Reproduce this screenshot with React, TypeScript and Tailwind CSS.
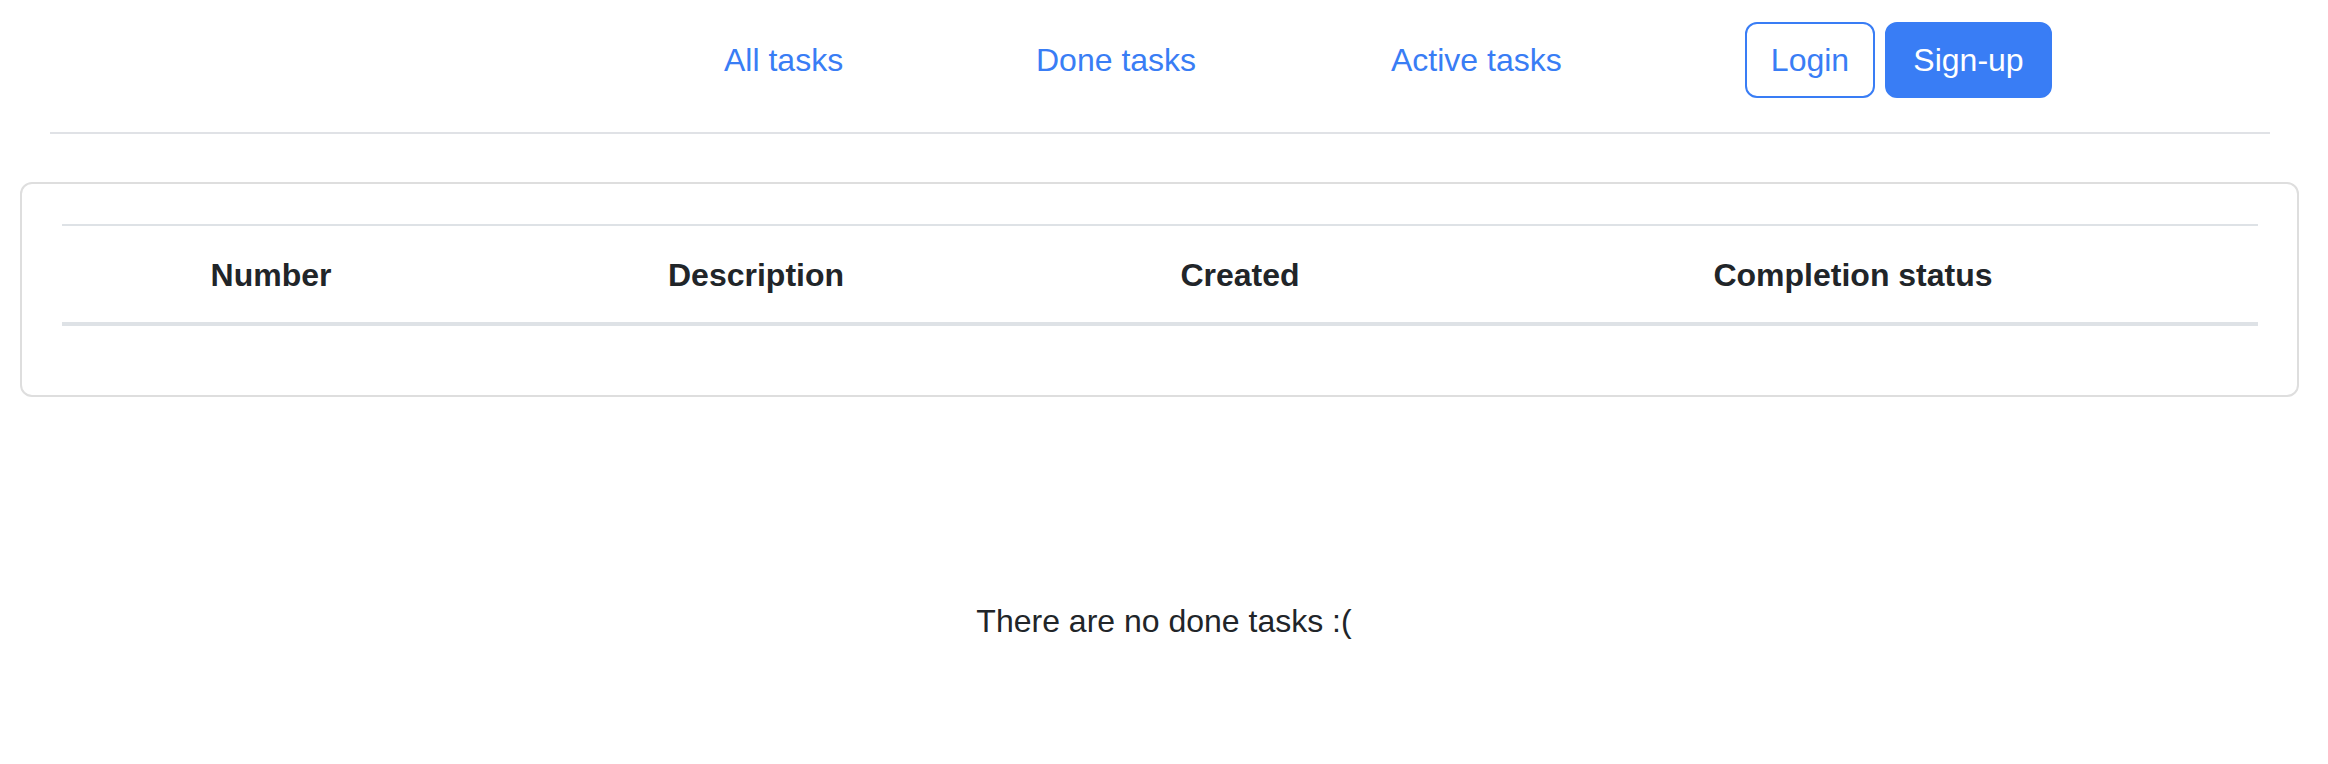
import React from "react";

export default function App() {
  return (
    <div className="min-h-[764px] bg-white font-['Liberation_Sans',Arial,sans-serif] text-[32px] leading-[48px] text-[#212529]">
      <nav className="flex items-center h-[98px] pt-[22px] pl-[724px]">
        <a href="#" className="w-[312px] text-[#397df5] no-underline">All tasks</a>
        <a href="#" className="w-[355px] text-[#397df5] no-underline">Done tasks</a>
        <a href="#" className="w-[354px] text-[#397df5] no-underline">Active tasks</a>
        <div className="flex gap-[10px]">
          <button className="h-[76px] w-[130px] border-2 border-[#397df5] rounded-[12px] text-[#397df5] bg-white">
            Login
          </button>
          <button className="h-[76px] w-[167px] border-2 border-[#397df5] rounded-[12px] text-white bg-[#397df5]">
            Sign-up
          </button>
        </div>
      </nav>
      <div className="mt-[34px] ml-[50px] w-[2220px] h-[2px] bg-[#e0e2e6]" />
      <div className="mt-[48px] ml-[20px] w-[2279px] border-2 border-[#dedede] rounded-[12px] pt-[40px] px-[40px] pb-[69px]">
        <div className="w-[2196px] h-[102px] pt-[2px] border-t-2 border-b-4 border-[#dee2e6] grid grid-cols-[418px_552px_416px_810px] items-center font-bold">
          <div className="text-center">Number</div>
          <div className="text-center">Description</div>
          <div className="text-center">Created</div>
          <div className="text-center">Completion status</div>
        </div>
      </div>
      <p className="mt-[200px] text-center">There are no done tasks :(</p>
    </div>
  );
}
